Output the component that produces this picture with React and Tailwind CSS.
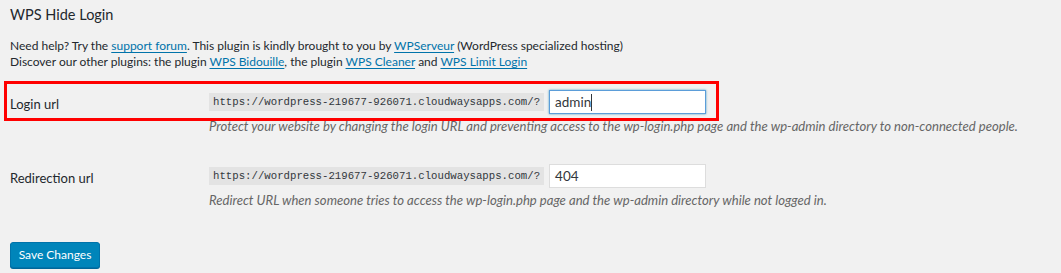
import React from 'react';

const PREFIX = 'https://wordpress-219677-926071.cloudwaysapps.com/?';

const Link = ({ children }) => (
  <a href="#" className="text-[#0073aa] underline underline-offset-[2px]">
    {children}
  </a>
);

const Field = ({ label, value, focused, help }) => (
  <div className="flex items-start">
    <div className="w-[199px] shrink-0 pt-[5px] text-[13px] leading-[18px] text-[#23282d]">{label}</div>
    <div>
      <div className="flex items-center gap-[5px]">
        <code className="bg-[#e3e3e3] px-[4px] h-[18px] flex items-center font-['Liberation_Mono',monospace] text-[10.7px] text-[#32373c]">
          {PREFIX}
        </code>
        {focused ? (
          <div className="w-[157px] h-[24px] bg-white border border-[#5b9dd9] shadow-[0_0_2px_rgba(30,140,190,0.8)] flex items-center px-[5px] text-[13.5px] text-[#32373c]">
            admin
            <span className="w-px h-[17px] bg-[#32373c]" />
          </div>
        ) : (
          <div className="w-[157px] h-[24px] bg-white border border-[#ddd] flex items-center px-[5px] text-[13.5px] text-[#32373c]">
            {value}
          </div>
        )}
      </div>
      <p className="mt-[4px] text-[13.1px] leading-[16px] italic text-[#666] whitespace-nowrap">{help}</p>
    </div>
  </div>
);

export default function App() {
  return (
    <div className="relative w-[1061px] h-[273px] overflow-hidden bg-[#f1f1f1] pl-[10px] pt-[5px] font-['Lato',sans-serif] text-[#23282d]">
      <h2 className="text-[14.5px] leading-[20px]">WPS Hide Login</h2>
      <div className="mt-[13px] text-[12px] leading-[16px]">
        <p>
          Need help? Try the <Link>support forum</Link>. This plugin is kindly brought to you by{' '}
          <Link>WPServeur</Link> (WordPress specialized hosting)
        </p>
        <p>
          Discover our other plugins: the plugin <Link>WPS Bidouille</Link>, the plugin{' '}
          <Link>WPS Cleaner</Link> and <Link>WPS Limit Login</Link>
        </p>
      </div>
      <div className="mt-[20px]">
        <Field
          label="Login url"
          focused
          help="Protect your website by changing the login URL and preventing access to the wp-login.php page and the wp-admin directory to non-connected people."
        />
      </div>
      <div className="mt-[30px]">
        <Field
          label="Redirection url"
          value="404"
          help="Redirect URL when someone tries to access the wp-login.php page and the wp-admin directory while not logged in."
        />
      </div>
      <button className="mt-[34px] w-[90px] h-[26px] bg-[#0085ba] border border-[#0073aa] rounded-[3px] shadow-[0_1px_0_#006799] text-white text-[12px] leading-[24px]">
        Save Changes
      </button>
      <div className="absolute left-[4px] top-[81px] w-[715px] h-[40px] border-[3px] border-[#ff0000] pointer-events-none" />
    </div>
  );
}
